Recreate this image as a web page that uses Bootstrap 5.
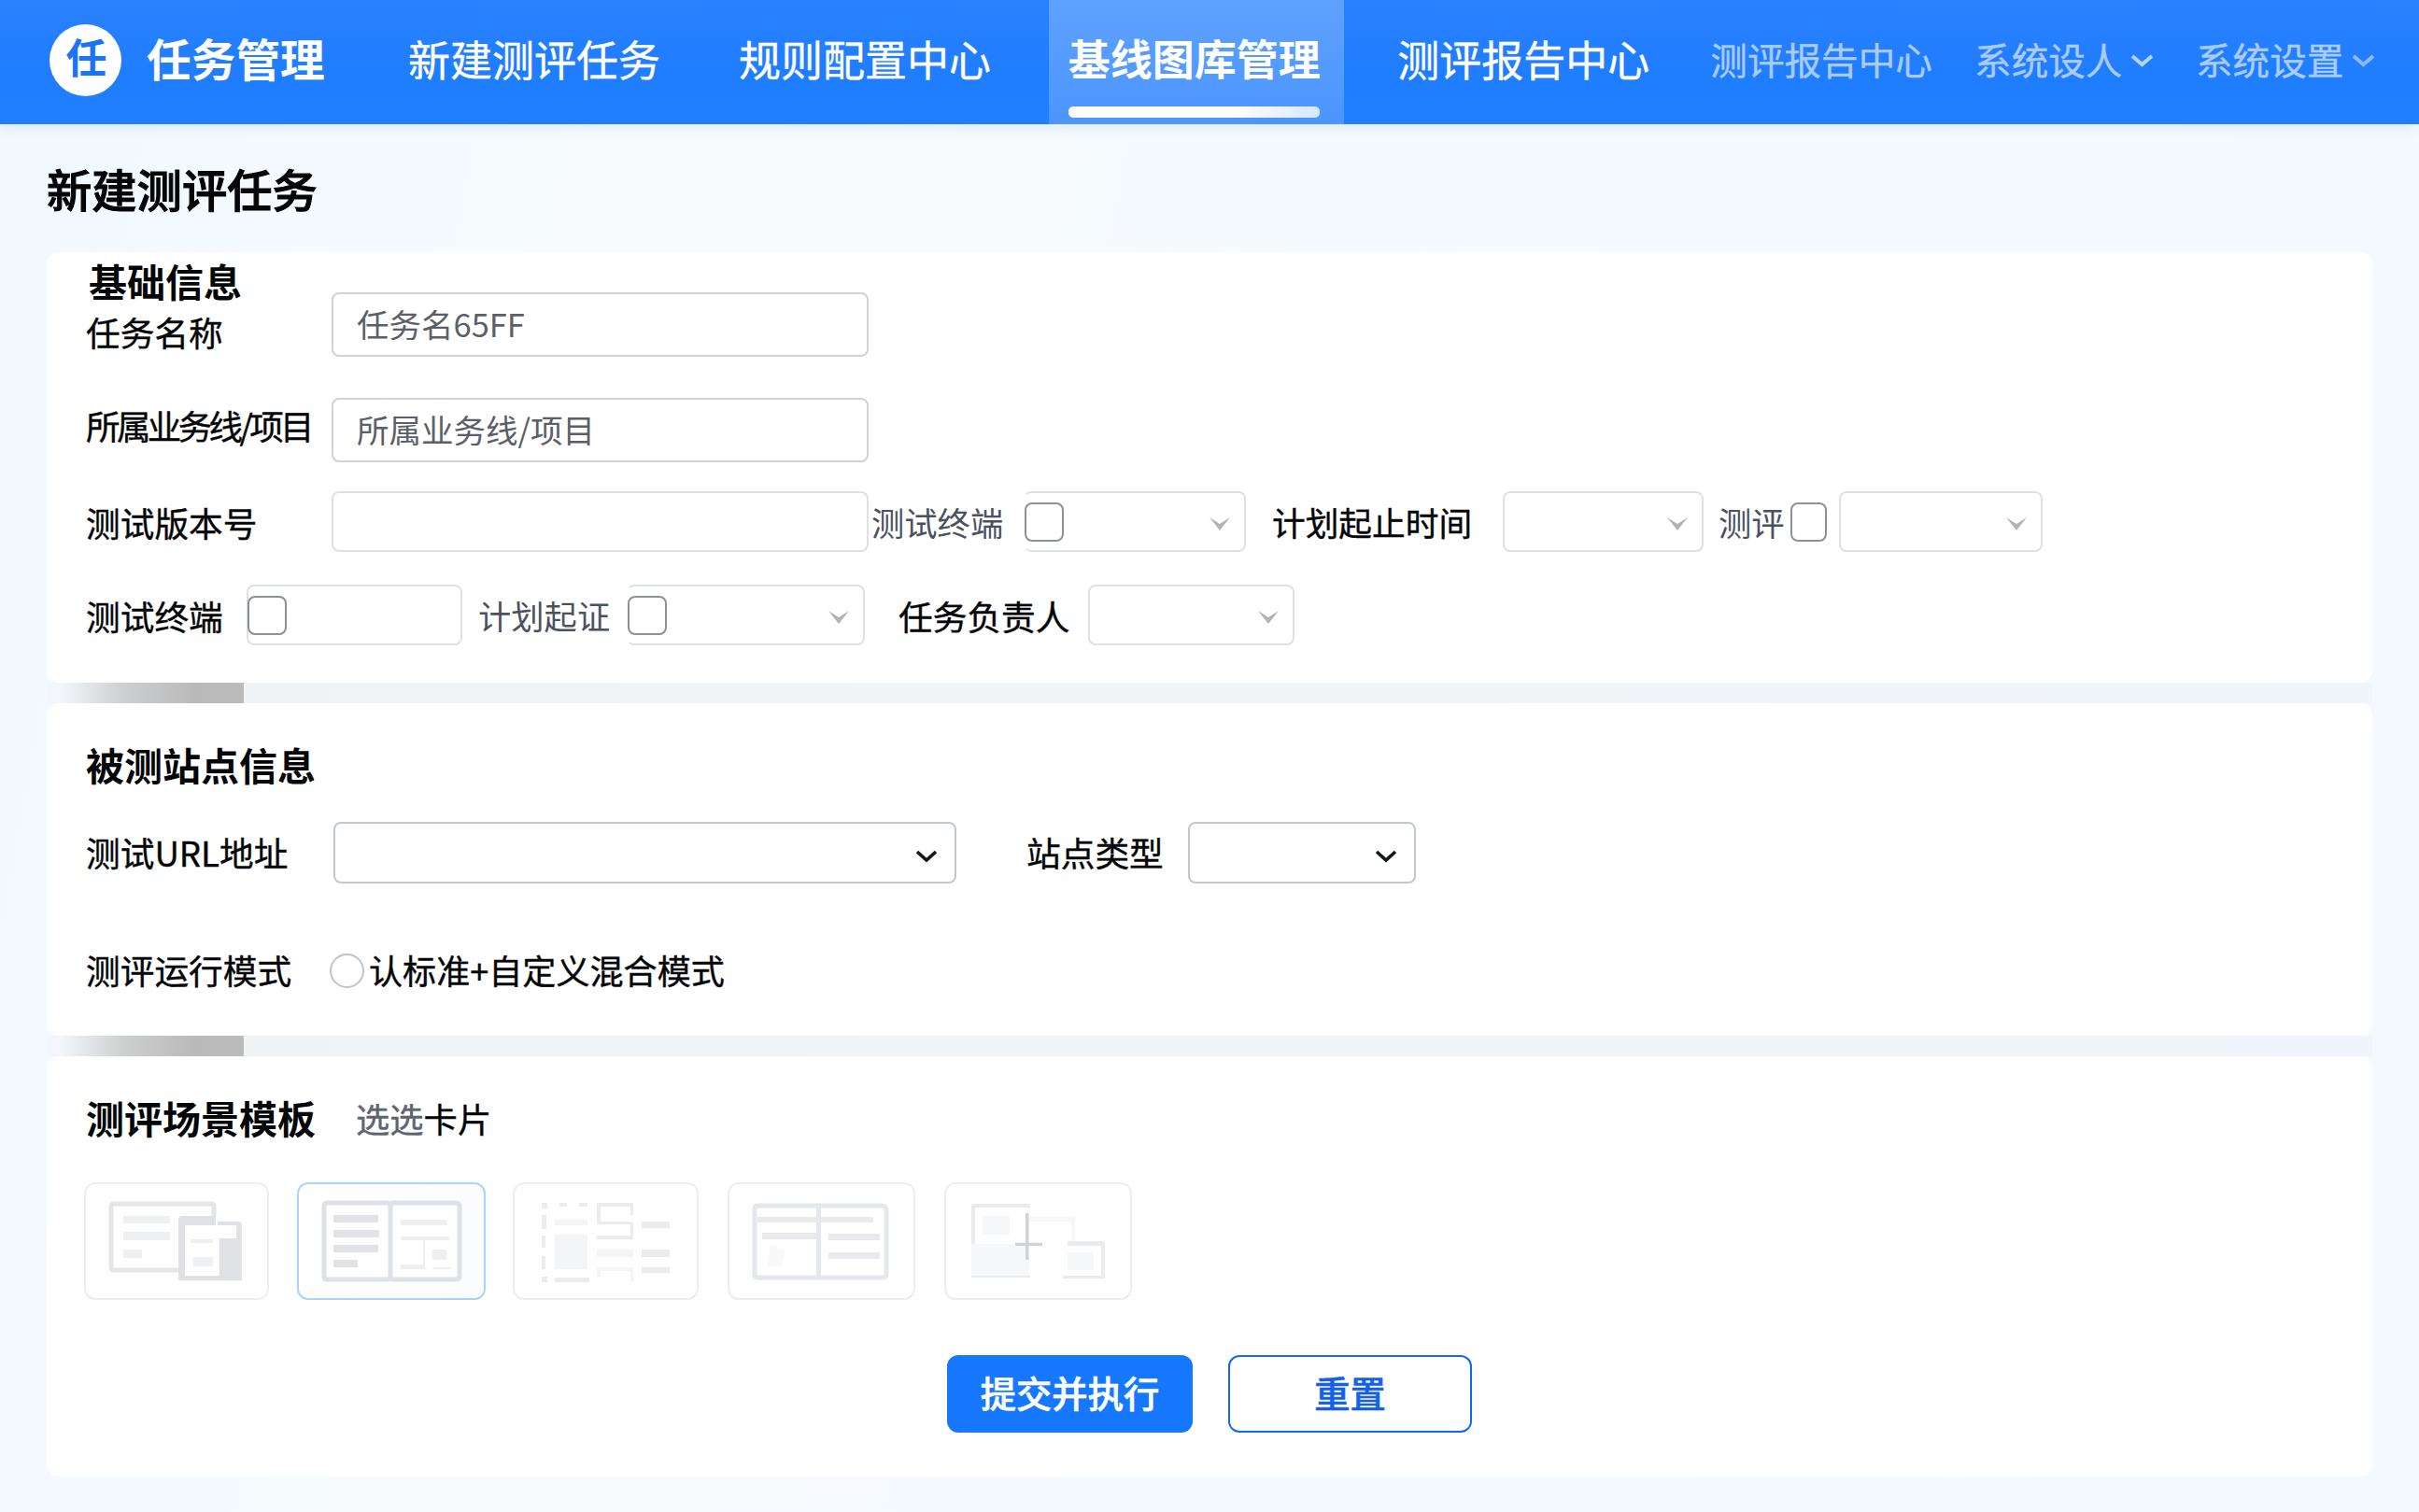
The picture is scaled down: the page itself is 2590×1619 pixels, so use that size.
<!DOCTYPE html>
<html lang="zh-CN">
<head>
<meta charset="utf-8">
<meta name="viewport" content="width=device-width, initial-scale=1">
<title>新建测评任务</title>
<link href="https://cdn.jsdelivr.net/npm/bootstrap@5.3.0/dist/css/bootstrap.min.css" rel="stylesheet">
<style>
  body{font-family:"Noto Sans CJK SC","Noto Sans",sans-serif;color:#050608;background:linear-gradient(100deg,#f1f9fe 0%,#f7fbfe 25%,#f5fafe 60%,#f3f9fe 100%);min-height:1619px;overflow:hidden;white-space:nowrap}
  .topbar{height:133px;padding:0 43px 0 53px;background:linear-gradient(#2a82ff,#1f7dff 60%,#207eff);box-shadow:0 2px 14px rgba(60,110,220,.14)}
  .topbar .nav-link{padding:0 0 8px;font-size:45px;line-height:66px;color:#fff;-webkit-text-stroke:.4px}
  .logo{width:77px;height:77px;border-radius:50%;background:#fff;color:#1b74f5;font-size:44px;font-weight:700;line-height:69px;text-align:center;margin-bottom:4px;text-indent:2px}
  .topbar .navbar-brand{font-size:47.7px;font-weight:700;line-height:66px;color:#fff;margin:0 0 0 27px;padding:0 0 10px;width:192px}
  .tab-on{width:318px;height:133px;padding-top:29px;padding-right:5px;background:linear-gradient(#5ea2ff,#4c95ff)}
  .topbar .tab-on .nav-link{font-weight:700;padding:0;-webkit-text-stroke:0}
  .tab-bar{width:269px;height:12px;border-radius:5px;margin-top:19px;background:linear-gradient(90deg,#fff 65%,#d7e7ff)}
  .topbar .dim{font-size:39.6px;color:#a9cbff}
  .dim svg{width:25px;height:16px;margin:4px 0 0 9px}
  .n1{margin-left:88px;width:270px}.n2{margin-left:84px;width:270px}.n3{margin-left:62px}.n4{margin-left:57px;width:270px}.n5{margin-left:65px;width:240px}.n6{margin-left:44px;width:197px}.n7{margin-left:41px;width:197px}
  .page-title{font-size:48.3px;font-weight:500;line-height:70px;margin:0;padding-left:50px;height:137px;padding-top:33px;color:#050608;-webkit-text-stroke:1.1px}
  .panels{margin:0 50px}
  .panel{background:#fff;border:0;border-radius:13px;padding-left:42px}
  .panel-a{height:461px;padding-top:3px}.panel-b{height:356px}.panel-c{height:450px}
  .strip{height:22px;background:linear-gradient(90deg,#eff3f6,#f2f5f7 50%,#f0f5fb 100%)}
  .strip div{width:211px;height:22px;background:linear-gradient(90deg,#f3f7fb 0 7%,#cfd0d2 38%,#b9b9b9 75%,#bcbcbc)}
  .sec{font-size:41px;font-weight:700;line-height:54px;margin:0}
  .lb{font-size:36.7px;line-height:50px;padding-bottom:3px;flex:none;-webkit-text-stroke:.4px}
  .lb-col{width:263px}
  .low{padding:1px 0 0}
  .high{padding-bottom:9px}
  .soft{font-size:35.3px;color:#4a5260;-webkit-text-stroke:0}
  .tight{letter-spacing:-3.6px;font-size:36.5px}
  .form-control,.form-select{flex:none;border:2px solid #dee1e3;border-radius:8px;background-color:#fff;font-size:34.5px;line-height:50px;height:65px;padding:0 25px 3px}
  .form-control::placeholder{color:#5b6068;opacity:1}
  .w-main{width:575px}.tall{height:69px;border-color:#cfd2d6}
  .form-select{background-image:url("data:image/svg+xml,%3Csvg xmlns='http://www.w3.org/2000/svg' viewBox='0 0 24 16'%3E%3Cpath fill='%23b0b4b9' d='M1 1l11 7L23 1 12 15z'/%3E%3C/svg%3E");background-size:24px 16px;background-position:right 14px top 25px}
  .open-l{border-left-color:transparent}
  .solid{border-color:#c3c8cc;height:66px;background-image:url("data:image/svg+xml,%3Csvg xmlns='http://www.w3.org/2000/svg' viewBox='0 0 24 16'%3E%3Cpath fill='none' stroke='%2315181c' stroke-width='3.6' d='M2 3l10 9L22 3'/%3E%3C/svg%3E");background-position:right 18px top 27px}
  .ck{width:42px;height:42px;margin:0;border:2px solid #8c9198;border-radius:8px!important;flex:none}
  .over{left:1px;top:12px}
  .rd{width:37px;height:37px;margin:0;border:2px solid #c0c4c8;flex:none}
  .thumb{width:200px;height:126px;border:2px solid #eceeef;border-radius:12px;overflow:hidden;background:#fefefe}
  .thumb svg{display:block;margin:-2px}
  .thumb-on{border-color:#a9d4fb;background:linear-gradient(90deg,#fff,#fafcfe)}
  .act{height:83px;border-radius:12px;font-size:38.3px;line-height:50px;padding:0 0 3px;border-width:2px;-webkit-text-stroke:.6px}
  .act-go{width:263px;background:#1677ff;border-color:#1677ff;font-weight:500;color:#fff}
  .act-re{width:261px;border-color:#1169f2;color:#1460e8;background:#fff;font-weight:500}
</style>
<script src="https://cdn.jsdelivr.net/npm/bootstrap@5.3.0/dist/js/bootstrap.bundle.min.js"></script>
</head>
<body>
<nav class="topbar d-flex align-items-center">
  <div class="logo flex-shrink-0">任</div>
  <a class="navbar-brand flex-shrink-0">任务管理</a>
  <a class="nav-link n1">新建测评任务</a>
  <a class="nav-link n2">规则配置中心</a>
  <div class="tab-on n3 d-flex flex-column align-items-center"><a class="nav-link">基线图库管理</a><div class="tab-bar"></div></div>
  <a class="nav-link n4">测评报告中心</a>
  <a class="nav-link dim n5">测评报告中心</a>
  <a class="nav-link dim n6 d-flex align-items-center">系统设人<svg viewBox="0 0 25 16"><path d="M2 3l10.500 9L23 3" fill="none" stroke="#b5d3ff" stroke-width="4"/></svg></a>
  <a class="nav-link dim n7 d-flex align-items-center">系统设置<svg viewBox="0 0 25 16"><path d="M2 3l10.500 9L23 3" fill="none" stroke="#8dbaff" stroke-width="4"/></svg></a>
</nav>

<h1 class="page-title">新建测评任务</h1>

<main class="panels">
  <section class="panel panel-a">
    <div class="d-flex align-items-start">
      <div class="lb-col flex-shrink-0">
        <h2 class="sec" style="padding-left:3px;height:57px">基础信息</h2>
        <div class="lb">任务名称</div>
      </div>
      <input class="form-control w-main tall" style="margin-top:40px" placeholder="任务名65FF">
    </div>
    <div class="d-flex align-items-center" style="margin-top:43px">
      <label class="lb lb-col tight high">所属业务线/项目</label>
      <input class="form-control w-main tall" placeholder="所属业务线/项目">
    </div>
    <div class="d-flex align-items-center" style="margin-top:31px">
      <label class="lb lb-col low">测试版本号</label>
      <input class="form-control w-main">
      <label class="lb soft low" style="margin-left:3px;width:163px">测试终端</label>
      <div class="position-relative"><select class="form-select open-l" style="width:238px"></select><input type="checkbox" class="form-check-input ck over position-absolute"></div>
      <label class="lb low" style="margin-left:28px;width:247px;font-size:35.700px">计划起止时间</label>
      <select class="form-select" style="width:215px"></select>
      <label class="lb soft low" style="margin-left:16px;width:77px">测评</label>
      <input type="checkbox" class="form-check-input ck" style="width:39px">
      <select class="form-select" style="width:218px;margin-left:13px"></select>
    </div>
    <div class="d-flex align-items-center" style="margin-top:35px">
      <label class="lb low" style="width:172px">测试终端</label>
      <div class="position-relative"><input class="form-control" style="width:231px"><input type="checkbox" class="form-check-input ck over position-absolute"></div>
      <label class="lb soft low" style="margin-left:17px;width:159px">计划起证</label>
      <div class="position-relative"><select class="form-select open-l" style="width:255px"></select><input type="checkbox" class="form-check-input ck over position-absolute"></div>
      <label class="lb low" style="margin-left:36px;width:203px">任务负责人</label>
      <select class="form-select" style="width:221px"></select>
    </div>
  </section>

  <div class="strip"><div></div></div>

  <section class="panel panel-b">
    <h2 class="sec" style="padding-top:38px">被测站点信息</h2>
    <div class="d-flex align-items-center" style="margin-top:35px">
      <label class="lb" style="width:265px">测试URL地址</label>
      <select class="form-select solid" style="width:667px"></select>
      <label class="lb" style="margin-left:75px;width:173px">站点类型</label>
      <select class="form-select solid" style="width:244px"></select>
    </div>
    <div class="d-flex align-items-center" style="margin-top:67px">
      <label class="lb" style="width:261px">测评运行模式</label>
      <input type="radio" class="form-check-input rd">
      <label class="lb" style="font-size:36.100px;margin-left:5px">认标准+自定义混合模式</label>
    </div>
  </section>

  <div class="strip"><div></div></div>

  <section class="panel panel-c">
    <div class="d-flex align-items-center" style="padding-top:38px">
      <h2 class="sec">测评场景模板</h2>
      <span class="lb low" style="margin-left:43px;font-size:36.300px"><span style="color:#5d6571">选选</span>卡片</span>
    </div>
    <div class="d-flex" style="margin:43px 0 0 -2px">
      <div class="thumb" style="width:198px">
        <svg width="198" height="126" fill="#eff0f1"><path d="M101 94H32q-3 0-3-3V26q0-3 3-3h104q3 0 3 3v10" fill="none" stroke="#e4e6e9" stroke-width="5"/><path d="M42 36h50v8H42zM42 53h50v9H42zM42 72h20v9H42zM114 61h24v4h-24zM117 80h21v10h-21z"/><path d="M101 105V40q0-4 5-4h35v10h-33v54h37V60h18V46h-20v-4h22q4 0 4 4v59z" fill="#dfe1e4"/></svg>
      </div>
      <div class="thumb thumb-on" style="width:202px;margin-left:30px">
        <svg width="202" height="126" fill="#e1e3e7"><path d="M32 22h64q4 0 4 3v76q0 3-4 3H32q-3 0-3-3V25q0-3 3-3zM104 22h66q4 0 4 4v75q0 3-4 3h-66q-4 0-4-3V25q0-3 4-3z" fill="#fff" stroke="#dfe1e8" stroke-width="5"/><path d="M39 35h48v8H39zM39 51h49v8H39zM39 67h48v8H39zM39 83h26v8H39z"/><path fill="#eeeff1" d="M111 40h50v6h-50zM111 58h52v4h-52zM135 62h2v26h-2zM111 88h26v5h-26zM145 72h15v11h-15zM145 91h19v2h-19z"/></svg>
      </div>
      <div class="thumb" style="width:199px;margin-left:29px">
        <svg width="199" height="126" fill="#ebecee"><path d="M31 22h6v6h-6zM31 35h5v15h-5zM31 57h4v13h-4zM31 79h4v14h-4zM31 101h6v6h-6zM50 22h8v4h-8zM71 22h9v4h-9zM45 102h37v5H45zM90 22h39v13h-3v-9H94v16h32v3H90zM126 43h3v18H90v-4h36zM138 42h30v7h-30zM138 72h30v8h-30zM138 91h30v6h-30z"/><path fill="#f4f5f6" d="M45 40h35v6H45zM45 56h35v37H45zM90 72h39v8H90zM90 91h39v15h-3V95H94v6h-4z"/></svg>
      </div>
      <div class="thumb" style="width:201px;margin-left:31px">
        <svg width="201" height="126" fill="#e9eaed"><path d="M32 25h132q6 0 6 5v68q0 4-5 4H33q-4 0-4-4V29q0-4 3-4zM97.500 25v77" fill="#fff" stroke="#e4e7eb" stroke-width="5"/><path d="M32 37h124v6H32zM37 54h58v7H37zM108 55h55v7h-55zM108 75h55v7h-55z"/><path fill="#f8f9fa" d="M46 65l16 9-4 17-16-2z"/></svg>
      </div>
      <div class="thumb" style="width:201px;margin-left:31px">
        <svg width="201" height="126"><path fill="#e9ebee" d="M29 26q0-3 3-3h60v4H33v39h-4zM132 63h37q3 0 3 3v37h-45v-3h41V68h-36zM29 100h63v2H29z"/><path fill="#f6f7f9" d="M41 36h29v20H41zM132 75h28v19h-28zM29 66h62v34H29zM92 37h48v26h-4V42H92z"/><path fill="#d0d2d4" d="M87 33h3.500v31.700H105V68H90.500v15H87V68H76v-3.300h11z"/></svg>
      </div>
    </div>
    <div class="d-flex" style="margin:59px 0 0 922px">
      <button class="btn btn-primary act act-go">提交并执行</button>
      <button class="btn btn-outline-primary act act-re" style="margin-left:38px">重置</button>
    </div>
  </section>
</main>
</body>
</html>
